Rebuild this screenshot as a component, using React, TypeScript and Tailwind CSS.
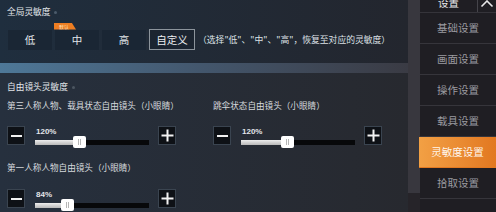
import React from 'react';

const levels = ['低', '中', '高'];

const menu = ['基础设置', '画面设置', '操作设置', '载具设置', '灵敏度设置', '拾取设置'];

function StepBox({ plus }: { plus?: boolean }) {
    return (
        <div className="w-[18px] h-[19px] shrink-0 bg-[#0e1116] border border-[#3a4450] flex items-center justify-center">
            {plus ? (
                <svg width="13" height="13" viewBox="0 0 13 13">
                    <path d="M6.5 0.5v12M0.5 6.5h12" stroke="#f2f2f2" strokeWidth="2" />
                </svg>
            ) : (
                <div className="w-[11px] h-[2px] bg-[#f2f2f2]" />
            )}
        </div>
    );
}

function Slider({ value, pct }: { value: string; pct: number }) {
    return (
        <div className="flex items-center">
            <StepBox />
            <div className="w-[114px] ml-[10px] mr-[9px] flex flex-col">
                <span className="h-[10px] leading-[10px] pl-[1px] text-[8px] font-bold text-[#e4e6ea] font-['Liberation_Sans',sans-serif]">
                    {value}
                </span>
                <div className="relative mt-[3px] h-[5px] bg-[#07080a]">
                    <div className="h-full bg-gradient-to-b from-[#eeeeee] to-[#b8b8b8]" style={{ width: `${pct}%` }} />
                    <div
                        className="absolute top-[-4px] w-[13px] h-[12px] -ml-[6px] rounded-[2px] bg-white flex items-center justify-center gap-[1px]"
                        style={{ left: `${pct}%` }}
                    >
                        <div className="w-[1px] h-[6px] bg-[#b5b5b5]" />
                        <div className="w-[1px] h-[6px] bg-[#b5b5b5]" />
                    </div>
                </div>
            </div>
            <StepBox plus />
        </div>
    );
}

export default function App() {
    return (
        <div className="w-[496px] h-[212px] overflow-hidden flex bg-[#262429] font-['Noto_Sans_CJK_SC',sans-serif]">
            {/* main content */}
            <div className="w-[408px] flex flex-col">
                <section className="h-[63px] bg-gradient-to-r from-[#1f2e3e] to-[#23262e] px-[7px] pt-[5px]">
                    <div className="flex items-center gap-[4px] h-[14px]">
                        <span className="text-[8.7px] leading-[14px] text-[#e1e5ea]">全局灵敏度</span>
                        <span className="w-[3px] h-[3px] rounded-full bg-[#4c5b6b]" />
                    </div>
                    <div className="mt-[10px] pl-[1px] flex items-center gap-[3px]">
                        {levels.map((l) => (
                            <div key={l} className="relative w-[44px] h-[20px] bg-[#1a2634] flex items-center justify-center text-[10.5px] text-[#e3e6ea]">
                                {l}
                                {l === '中' && (
                                    <span className="absolute -top-[7px] -left-[1px] w-[22px] h-[7px] bg-[#ee7e22] [clip-path:polygon(0_0,80%_0,100%_100%,0_100%)] text-[5px] leading-[7px] pl-[5px] text-[#ffe3c0]">
                                        默认
                                    </span>
                                )}
                            </div>
                        ))}
                        <div className="w-[46px] h-[21px] border border-[#8c949c] bg-[#1b2430] flex items-center justify-center text-[10.5px] text-[#eceef0]">
                            自定义
                        </div>
                        <span className="text-[8.8px] text-[#dde1e6] whitespace-nowrap">
                            （选择"低"、"中"、"高"，恢复至对应的灵敏度）
                        </span>
                    </div>
                </section>

                <div className="h-[10px] bg-gradient-to-r from-[#4e7898] via-[#43566c] to-[#3a3b44]" />

                <section className="flex-1 bg-gradient-to-r from-[#26303e] to-[#27292f] pl-[7px] pt-[7px]">
                    <div className="flex items-center gap-[4px] h-[14px]">
                        <span className="text-[8.7px] leading-[14px] text-[#e1e5ea]">自由镜头灵敏度</span>
                        <span className="w-[3px] h-[3px] rounded-full bg-[#4c5661]" />
                    </div>
                    <div className="grid grid-cols-[206px_1fr]">
                        <div className="flex flex-col">
                            <span className="mt-[5px] h-[12px] leading-[12px] text-[8.6px] text-[#d6dade]">第三人称人物、载具状态自由镜头（小眼睛）</span>
                            <div className="mt-[15px]">
                                <Slider value="120%" pct={39} />
                            </div>
                            <span className="mt-[16px] h-[12px] leading-[12px] text-[8.6px] text-[#d6dade]">第一人称人物自由镜头（小眼睛）</span>
                            <div className="mt-[16px]">
                                <Slider value="84%" pct={28} />
                            </div>
                        </div>
                        <div className="flex flex-col">
                            <span className="mt-[5px] h-[12px] leading-[12px] text-[8.6px] text-[#d6dade]">跳伞状态自由镜头（小眼睛）</span>
                            <div className="mt-[15px]">
                                <Slider value="120%" pct={40} />
                            </div>
                        </div>
                    </div>
                </section>
            </div>

            {/* gutter */}
            <div className="w-[12px] flex flex-col">
                <div className="h-[193px] bg-[#38373e]" />
            </div>

            {/* sidebar */}
            <nav className="w-[76px] flex flex-col bg-[#1f1e23]">
                <div className="h-[13px] flex border-b border-[#35343a] overflow-hidden">
                    <div className="flex-1 flex justify-center">
                        <span className="-mt-[4px] text-[10.5px] leading-[14px] text-[#e8e8ea]">设置</span>
                    </div>
                    <div className="w-[19px] border-l border-[#45444a] flex justify-center">
                        <svg width="14" height="9" viewBox="0 0 14 9" className="-mt-[1px]">
                            <path d="M1.5 7.5L7 2l5.5 5.5" fill="none" stroke="#e8e8ea" strokeWidth="1.6" />
                        </svg>
                    </div>
                </div>
                {menu.map((m) => {
                    const active = m === '灵敏度设置';
                    return (
                        <div
                            key={m}
                            className={`h-[31px] shrink-0 flex items-center justify-center text-[10.5px] border-b ${
                                active
                                    ? '-ml-[1px] bg-gradient-to-r from-[#f2a044] to-[#e27820] text-[#fff6ec] border-[#e27820]'
                                    : 'text-[#9b9ba0] border-[#36353b]'
                            }`}
                        >
                            {m}
                        </div>
                    );
                })}
            </nav>
        </div>
    );
}
